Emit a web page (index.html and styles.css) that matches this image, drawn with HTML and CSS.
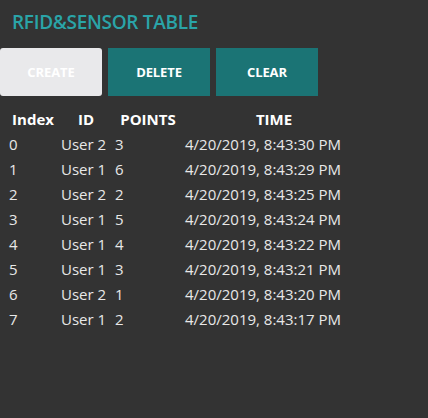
FILE: index.html
```html
<!DOCTYPE html>
<html>
<head>
<meta charset="utf-8">
<link rel="stylesheet" href="styles.css">
</head>
<body>
<h1 class="title">RFID&amp;SENSOR TABLE</h1>
<div class="actions">
  <button class="btn btn-disabled">CREATE</button>
  <button class="btn">DELETE</button>
  <button class="btn">CLEAR</button>
</div>
<table class="data">
  <thead>
    <tr><th class="c1">Index</th><th class="c2">ID</th><th class="c3">POINTS</th><th class="c4">TIME</th></tr>
  </thead>
  <tbody>
    <tr><td>0</td><td>User 2</td><td>3</td><td>4/20/2019, 8:43:30 PM</td></tr>
    <tr><td>1</td><td>User 1</td><td>6</td><td>4/20/2019, 8:43:29 PM</td></tr>
    <tr><td>2</td><td>User 2</td><td>2</td><td>4/20/2019, 8:43:25 PM</td></tr>
    <tr><td>3</td><td>User 1</td><td>5</td><td>4/20/2019, 8:43:24 PM</td></tr>
    <tr><td>4</td><td>User 1</td><td>4</td><td>4/20/2019, 8:43:22 PM</td></tr>
    <tr><td>5</td><td>User 1</td><td>3</td><td>4/20/2019, 8:43:21 PM</td></tr>
    <tr><td>6</td><td>User 2</td><td>1</td><td>4/20/2019, 8:43:20 PM</td></tr>
    <tr><td>7</td><td>User 1</td><td>2</td><td>4/20/2019, 8:43:17 PM</td></tr>
  </tbody>
</table>
</body>
</html>
```
FILE: styles.css
```css
html, body {
  margin: 0;
  padding: 0;
  background: #333333;
  height: 100%;
}
body {
  font-family: "Open Sans", "Noto Sans", sans-serif;
  color: #e8e8e8;
}
.title {
  margin: 0;
  padding: 10px 0 0 12px;
  height: 38px;
  box-sizing: border-box;
  font-size: 19px;
  font-weight: 600;
  line-height: 24px;
  color: #2aa4a8;
  letter-spacing: -0.3px;
}
.actions {
  display: flex;
  gap: 6px;
  margin-top: 10px;
}
.btn {
  width: 102px;
  height: 48px;
  border: none;
  border-radius: 0;
  background: #1b7475;
  color: #ffffff;
  font-family: "Open Sans", "Noto Sans", sans-serif;
  font-weight: 700;
  font-size: 13px;
  letter-spacing: -0.1px;
  padding: 0;
}
.btn-disabled {
  background: #e9e9eb;
  border-radius: 3px;
  color: #ffffff;
}
.data {
  margin: 10px 0 0 6px;
  border-collapse: separate;
  border-spacing: 2px;
  font-size: 15px;
}
.data th, .data td {
  padding: 1px;
  line-height: 21px;
  text-align: left;
  vertical-align: middle;
}
.data th {
  font-weight: 700;
  color: #ffffff;
  text-align: center;
}
.c1 { width: 48px; }
.c2 { width: 50px; }
.c3 { width: 66px; }
.c4 { width: 178px; }
```
